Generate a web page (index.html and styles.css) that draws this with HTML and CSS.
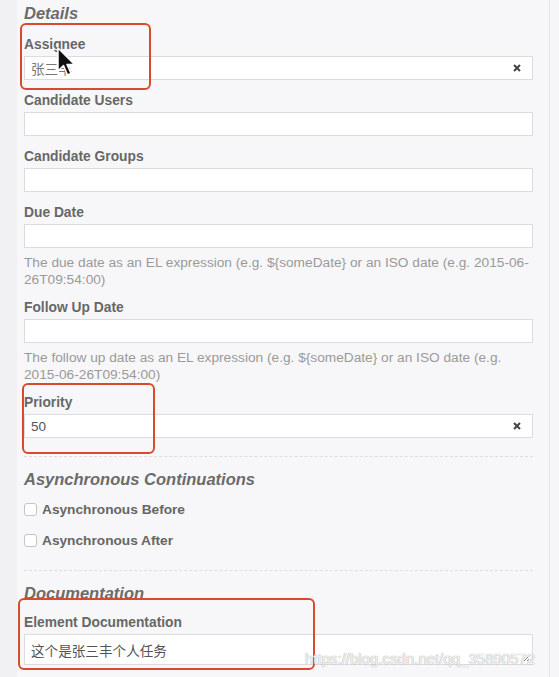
FILE: index.html
```html
<!DOCTYPE html>
<html>
<head>
<meta charset="utf-8">
<link rel="stylesheet" href="styles.css">
</head>
<body>
<div class="frame">
  <div class="strip"></div>
  <div class="panel">
    <section class="section details">
      <h2 class="heading">Details</h2>
      <div class="group">
        <span class="mark mark-assignee"></span>
        <label class="label">Assignee</label>
        <div class="input"><span class="value cjk">张三丰</span><span class="clear"><svg width="8" height="8" viewBox="0 0 8 8"><path d="M1 1L7 7M7 1L1 7" stroke="#444" stroke-width="2"/></svg></span></div>
      </div>
      <div class="group">
        <label class="label">Candidate Users</label>
        <div class="input"></div>
      </div>
      <div class="group">
        <label class="label">Candidate Groups</label>
        <div class="input"></div>
      </div>
      <div class="group">
        <label class="label">Due Date</label>
        <div class="input"></div>
        <p class="help">The due date as an EL expression (e.g. ${someDate} or an ISO date (e.g. 2015-06-26T09:54:00)</p>
      </div>
      <div class="group">
        <label class="label">Follow Up Date</label>
        <div class="input"></div>
        <p class="help">The follow up date as an EL expression (e.g. ${someDate} or an ISO date (e.g. 2015-06-26T09:54:00)</p>
      </div>
      <div class="group last">
        <span class="mark mark-priority"></span>
        <label class="label">Priority</label>
        <div class="input"><span class="value">50</span><span class="clear"><svg width="8" height="8" viewBox="0 0 8 8"><path d="M1 1L7 7M7 1L1 7" stroke="#444" stroke-width="2"/></svg></span></div>
      </div>
    </section>
    <section class="section async">
      <h2 class="heading">Asynchronous Continuations</h2>
      <div class="check"><span class="box"></span><span class="check-label">Asynchronous Before</span></div>
      <div class="check"><span class="box"></span><span class="check-label">Asynchronous After</span></div>
    </section>
    <section class="section docs">
      <h2 class="heading">Documentation</h2>
      <div class="group">
        <span class="mark mark-doc"></span>
        <label class="label">Element Documentation</label>
        <div class="textarea"><span class="value cjk">这个是张三丰个人任务</span><span class="grip"><svg width="7" height="7" viewBox="0 0 7 7"><path d="M6 1L1 6M6 4L4 6" stroke="#888" stroke-width="1"/></svg></span></div>
      </div>
    </section>
  </div>
  <div class="rest"></div>
</div>
<svg class="cursor" width="20" height="32" viewBox="0 0 20 32"><path d="M1 1L1 24L6.5 18.5L10.5 28L14 26.5L10 17.5L17.5 17.5Z" fill="#111" stroke="#fff" stroke-width="1.5" stroke-linejoin="round"/></svg>
<div class="watermark">https://blog.csdn.net/qq_35890572</div>
</body>
</html>
```
FILE: styles.css
```css
html, body {
  margin: 0;
  padding: 0;
  height: 100%;
  overflow: hidden;
}
body {
  background: #f6f6f8;
  font-family: "Liberation Sans", Arial, sans-serif;
  color: #666;
  position: relative;
}
.frame {
  display: flex;
  height: 677px;
}
.strip {
  width: 17px;
  flex: none;
  background: #f1f1f3;
}
.panel {
  box-sizing: border-box;
  width: 533px;
  flex: none;
  padding: 3px 16px 0 7px;
  border-right: 1px solid #e4e4e6;
  background: #f7f7f9;
}
.rest {
  flex: 1;
  background: #f6f6f8;
}
.heading {
  margin: 0;
  font-size: 16.5px;
  line-height: 20px;
  font-weight: bold;
  font-style: italic;
  color: #6b6b6b;
}
.details .heading {
  margin-bottom: 13px;
}
.section {
  border-bottom: 1px dashed #dedee0;
}
.details {
  padding-bottom: 18px;
}
.async {
  padding: 12px 0 20px;
}
.async .heading {
  margin-bottom: 10px;
}
.docs {
  border-bottom: none;
  padding-top: 12px;
}
.docs .heading {
  margin-bottom: 11px;
}
.group {
  position: relative;
  margin-bottom: 12px;
}
.group.last {
  margin-bottom: 0;
}
.label {
  display: block;
  font-size: 13.8px;
  line-height: 16px;
  font-weight: bold;
  color: #676767;
  padding-top: 1px;
  margin-bottom: 3px;
}
.input, .textarea {
  box-sizing: border-box;
  height: 24px;
  background: #fff;
  border: 1px solid #dcdcde;
  display: flex;
  align-items: center;
  padding: 0 6px;
  position: relative;
}
.textarea {
  height: 31px;
}
.value {
  font-size: 13.5px;
  color: #555;
  flex: 1;
}
.cjk {
  font-family: "Liberation Sans", "Noto Sans CJK SC", sans-serif;
  font-size: 13.6px;
}
.input .value.cjk {
  color: #777;
}
.clear {
  display: flex;
  width: 8px;
  height: 8px;
  margin-right: 5px;
}
.grip {
  position: absolute;
  right: 2px;
  bottom: 2px;
  display: flex;
}
.help {
  margin: 6px 0 -1px;
  font-size: 13.7px;
  line-height: 17px;
  color: #9a9a9a;
}
.check {
  display: flex;
  align-items: center;
  height: 20px;
  margin-bottom: 11px;
}
.check:last-child {
  margin-bottom: 0;
}
.box {
  box-sizing: border-box;
  width: 13px;
  height: 13px;
  border: 1px solid #c4c4c6;
  border-radius: 3px;
  background: #fff;
  margin-right: 5px;
}
.check-label {
  font-size: 13.7px;
  font-weight: bold;
  color: #666;
}
.mark {
  position: absolute;
  border: 2.5px solid #d64b2d;
  border-radius: 6px;
  box-sizing: border-box;
  z-index: 2;
}
.mark-assignee {
  left: -4px;
  top: -13px;
  width: 131px;
  height: 67px;
}
.mark-priority {
  left: -2px;
  top: -11px;
  width: 133px;
  height: 71px;
}
.mark-doc {
  left: -6px;
  top: -16px;
  width: 297px;
  height: 72px;
}
.cursor {
  position: absolute;
  left: 57px;
  top: 47px;
  z-index: 5;
}
.watermark {
  position: absolute;
  left: 305px;
  top: 649px;
  font-size: 15px;
  line-height: 20px;
  color: rgba(255, 255, 255, 0.85);
  text-shadow: 0 0 1px #b0b0b0, 0 0 1px #b0b0b0;
  z-index: 6;
}
```
